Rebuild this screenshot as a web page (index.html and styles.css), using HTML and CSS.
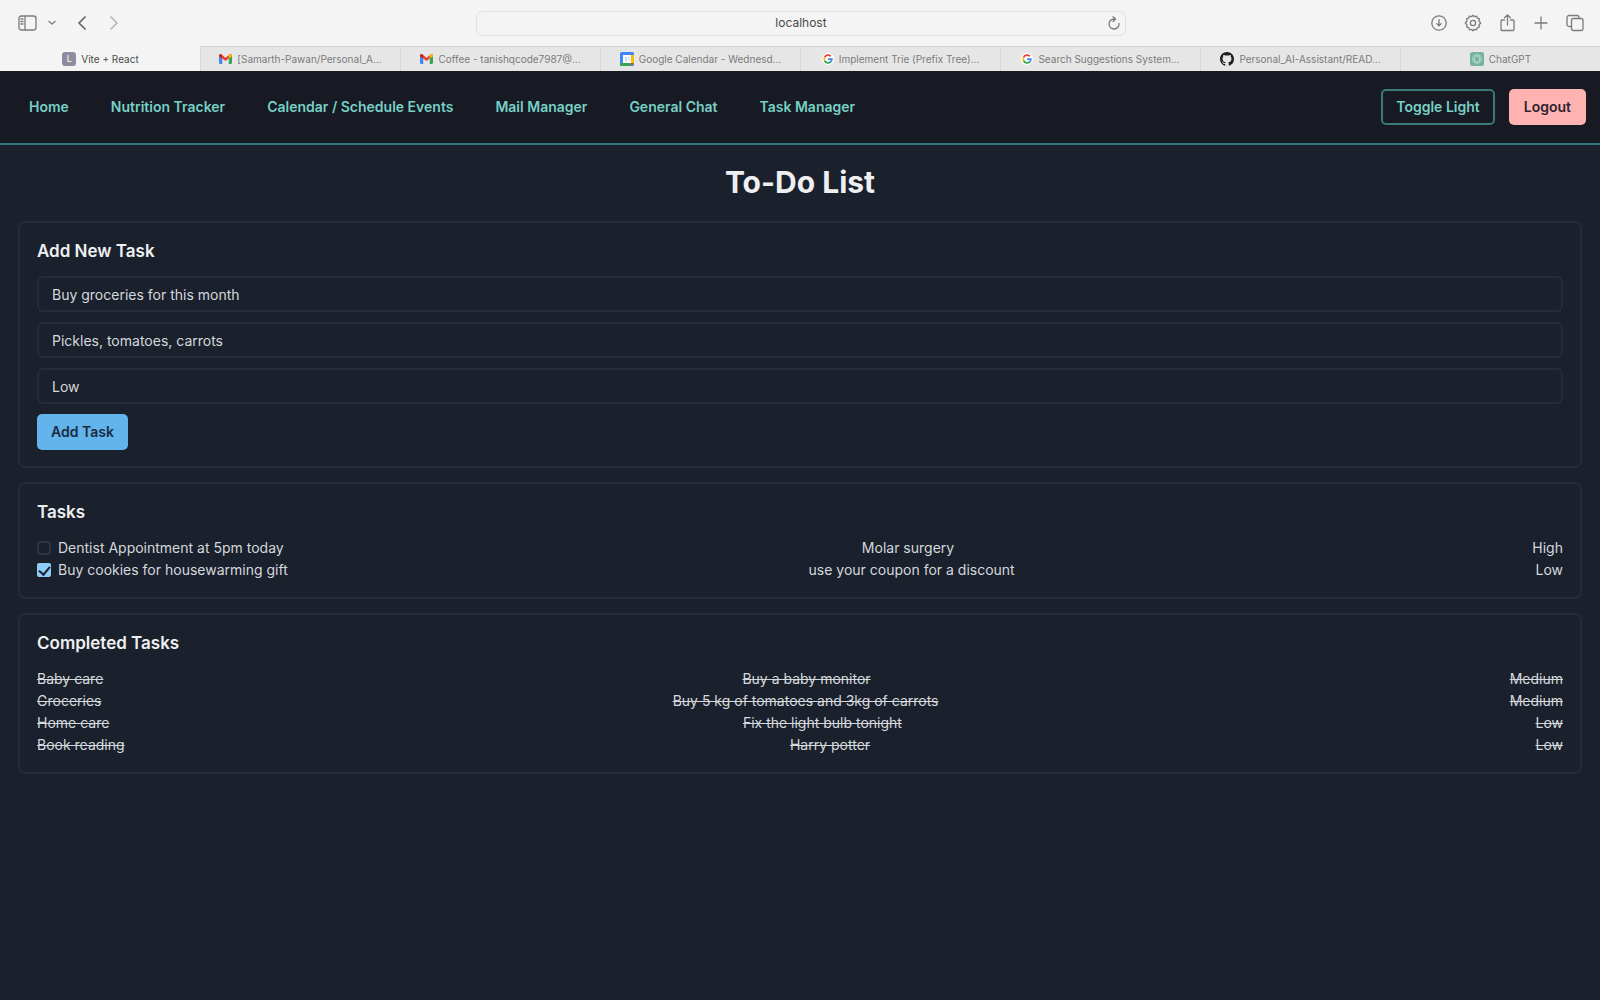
FILE: index.html
```html
<!DOCTYPE html>
<html lang="en">
<head>
<meta charset="utf-8">
<meta name="viewport" content="width=device-width, initial-scale=1">
<title>To-Do List</title>
<link rel="stylesheet" href="styles.css">
</head>
<body>
<svg class="defs" aria-hidden="true">
  <symbol id="gmail" viewBox="0 0 24 18">
    <path fill="#4285f4" d="M0 3v13a2 2 0 0 0 2 2h4V6z"/>
    <path fill="#34a853" d="M24 3v13a2 2 0 0 1-2 2h-4V6z"/>
    <path fill="#ea4335" d="M0 3C0 0 3-1 5 1l7 5.500 7-5.500c2-2 5-1 5 2l-6 5-6 4.500L6 8z"/>
    <path fill="#c5221f" d="M0 3C0 .5 3-1 5 1l1 .8V8L0 4z"/>
    <path fill="#fbbc04" d="M24 3c0-2.500-3-4-5-2l-1 .8V8l6-4z"/>
  </symbol>
  <symbol id="google" viewBox="0 0 48 48">
    <circle cx="24" cy="24" r="24" fill="#fff"/>
    <g fill="none" stroke-width="7">
      <path stroke="#ea4335" d="M10.500 17A15.500 15.500 0 0 1 35 13"/>
      <path stroke="#fbbc05" d="M10.500 31a15.500 15.500 0 0 1 0-14"/>
      <path stroke="#34a853" d="M35 35a15.500 15.500 0 0 1-24.500-4"/>
      <path stroke="#4285f4" d="M24 24h15.500A15.500 15.500 0 0 1 34 36"/>
    </g>
  </symbol>
</svg>

<div class="browser">
  <div class="toolbar">
    <div class="tools tools-left">
      <button class="tool" aria-label="Sidebar"><svg width="20" height="16" viewBox="0 0 20 16"><rect x="1" y="1" width="17" height="14" rx="2.500"/><path d="M7 1v14M3 4h2M3 6.500h2M3 9h2"/></svg></button>
      <button class="tool tool-menu" aria-label="Tab groups"><svg width="8" height="6" viewBox="0 0 8 6"><path d="M1 1.500l3 2.500 3-2.500"/></svg></button>
      <button class="tool tool-back" aria-label="Back"><svg width="10" height="14" viewBox="0 0 10 14"><path d="M8 1L2 7l6 6"/></svg></button>
      <button class="tool tool-forward" aria-label="Forward"><svg width="10" height="14" viewBox="0 0 10 14"><path d="M2 1l6 6-6 6"/></svg></button>
    </div>
    <div class="address">
      <input class="address-input" type="text" value="localhost" aria-label="Address">
      <button class="tool reload" aria-label="Reload"><svg width="14" height="14" viewBox="0 0 14 14"><path d="M12 7.500A5 5 0 1 1 7 3h1.500M6 .8L8.600 3 6 5.400"/></svg></button>
    </div>
    <div class="tools tools-right">
      <button class="tool" aria-label="Downloads"><svg width="18" height="18" viewBox="0 0 18 18"><circle cx="9" cy="9" r="7.200"/><path d="M9 5.500v6M6.800 9.600L9 11.800l2.200-2.200"/></svg></button>
      <button class="tool" aria-label="Settings"><svg width="18" height="18" viewBox="0 0 18 18"><path d="M9 1.200l1.500 1.500 2-.6.8 2 2.100.7-.5 2.100L16.700 9l-1.800 2 .5 2-2.100.8-.8 2-2-.5L9 16.800l-1.500-1.500-2 .5-.8-2-2.100-.8.500-2L1.300 9l1.800-2.100-.5-2.100 2.100-.7.800-2 2 .6z"/><circle cx="9" cy="9" r="2.600"/></svg></button>
      <button class="tool" aria-label="Share"><svg width="18" height="18" viewBox="0 0 18 18"><path d="M6.500 6H4a1 1 0 0 0-1 1v8.500a1 1 0 0 0 1 1h11a1 1 0 0 0 1-1V7a1 1 0 0 0-1-1h-2.500M9.500 11V1M6.500 3.800L9.500 1l3 2.800"/></svg></button>
      <button class="tool" aria-label="New tab"><svg width="18" height="18" viewBox="0 0 18 18"><path d="M9 3v12M3 9h12"/></svg></button>
      <button class="tool" aria-label="Tab overview"><svg width="18" height="18" viewBox="0 0 18 18"><rect x="5.500" y="4.500" width="11.500" height="12" rx="2"/><path d="M5.500 12.500H3a2 2 0 0 1-2-2V3.500a2 2 0 0 1 2-2h8a2 2 0 0 1 2 2v1"/></svg></button>
    </div>
  </div>
  <nav class="tabs" aria-label="Tabs">
    <a class="tab tab-active" href="#"><span class="letter">L</span><span class="tab-name">Vite + React</span></a>
    <a class="tab" href="#"><svg class="mail-icon"><use href="#gmail"/></svg><span class="tab-name">[Samarth-Pawan/Personal_A...</span></a>
    <a class="tab" href="#"><svg class="mail-icon"><use href="#gmail"/></svg><span class="tab-name">Coffee - tanishqcode7987@...</span></a>
    <a class="tab" href="#"><svg class="icon" viewBox="0 0 14 14"><rect width="14" height="14" rx="1.500" fill="#4285f4"/><path fill="#fbbc04" d="M11 3h3v8h-3z"/><path fill="#34a853" d="M0 11h11v3H1.500A1.500 1.500 0 0 1 0 12.500z"/><path fill="#ea4335" d="M11 11h3l-3 3z"/><path fill="#fff" d="M3 3h8v8H3z"/><path fill="none" stroke="#a9c7fa" stroke-width=".8" d="M5 5.500h1.500v3.500M5 7.200h1.500M5 9h1.500M8 5.500h1V9"/></svg><span class="tab-name">Google Calendar - Wednesd...</span></a>
    <a class="tab" href="#"><svg class="icon-small"><use href="#google"/></svg><span class="tab-name">Implement Trie (Prefix Tree)...</span></a>
    <a class="tab" href="#"><svg class="icon-small"><use href="#google"/></svg><span class="tab-name">Search Suggestions System...</span></a>
    <a class="tab" href="#"><svg class="icon" viewBox="0 0 16 16"><path fill="#1b1f24" d="M8 0C3.580 0 0 3.580 0 8c0 3.540 2.290 6.530 5.470 7.590.4.070.55-.17.55-.38 0-.19-.01-.82-.01-1.490-2.010.37-2.530-.49-2.690-.94-.09-.23-.48-.94-.82-1.130-.28-.15-.68-.52-.01-.53.63-.01 1.080.58 1.230.82.72 1.210 1.870.87 2.330.66.07-.52.28-.87.51-1.070-1.780-.2-3.640-.89-3.640-3.950 0-.87.31-1.590.82-2.150-.08-.2-.36-1.020.08-2.120 0 0 .67-.21 2.200.82a7.600 7.600 0 0 1 4 0c1.530-1.040 2.200-.82 2.200-.82.44 1.100.16 1.920.08 2.120.51.56.82 1.270.82 2.150 0 3.070-1.870 3.750-3.650 3.950.29.25.54.73.54 1.480 0 1.070-.01 1.930-.01 2.200 0 .21.15.46.55.38A8.010 8.010 0 0 0 16 8c0-4.420-3.580-8-8-8z"/></svg><span class="tab-name">Personal_AI-Assistant/READ...</span></a>
    <a class="tab" href="#"><svg class="icon" viewBox="0 0 14 14"><rect width="14" height="14" rx="2.500" fill="#74b3a0"/><g fill="none" stroke="#b9dcd2" stroke-width=".7"><ellipse cx="7" cy="7" rx="2.600" ry="4.800"/><ellipse cx="7" cy="7" rx="2.600" ry="4.800" transform="rotate(60 7 7)"/><ellipse cx="7" cy="7" rx="2.600" ry="4.800" transform="rotate(120 7 7)"/></g></svg><span class="tab-name">ChatGPT</span></a>
  </nav>
</div>

<header class="site-header">
  <nav class="site-nav">
    <a href="#">Home</a>
    <a href="#">Nutrition Tracker</a>
    <a href="#">Calendar / Schedule Events</a>
    <a href="#">Mail Manager</a>
    <a href="#">General Chat</a>
    <a href="#">Task Manager</a>
  </nav>
  <div class="actions">
    <button class="button button-outline">Toggle Light</button>
    <button class="button button-logout">Logout</button>
  </div>
</header>

<main class="page">
  <h1>To-Do List</h1>

  <section class="card">
    <h2>Add New Task</h2>
    <form class="task-form">
      <input class="field" type="text" value="Buy groceries for this month" aria-label="Task name">
      <input class="field" type="text" value="Pickles, tomatoes, carrots" aria-label="Description">
      <input class="field" type="text" value="Low" aria-label="Priority">
      <button class="button button-add" type="button">Add Task</button>
    </form>
  </section>

  <section class="card">
    <h2>Tasks</h2>
    <ul class="list">
      <li><label class="check"><input type="checkbox">Dentist Appointment at 5pm today</label><span>Molar surgery</span><span>High</span></li>
      <li><label class="check"><input type="checkbox" checked>Buy cookies for housewarming gift</label><span>use your coupon for a discount</span><span>Low</span></li>
    </ul>
  </section>

  <section class="card">
    <h2>Completed Tasks</h2>
    <ul class="list list-done">
      <li><span>Baby care</span><span>Buy a baby monitor</span><span>Medium</span></li>
      <li><span>Groceries</span><span>Buy 5 kg of tomatoes and 3kg of carrots</span><span>Medium</span></li>
      <li><span>Home care</span><span>Fix the light bulb tonight</span><span>Low</span></li>
      <li><span>Book reading</span><span>Harry potter</span><span>Low</span></li>
    </ul>
  </section>
</main>
</body>
</html>
```
FILE: styles.css
```css
* { box-sizing: border-box; }

body {
  margin: 0;
  min-height: 100vh;
  background: #1a202c;
  color: #d5d8dc;
  font: 14px/22px Inter, "Liberation Sans", sans-serif;
}

button, input { font: inherit; color: inherit; }
a { color: inherit; text-decoration: none; }
.defs { position: absolute; width: 0; height: 0; }

/* Browser frame */
.browser { background: #f4f4f4; color: #4b4b4b; }

.toolbar {
  display: grid;
  grid-template-columns: 1fr 650px 1fr;
  align-items: center;
  height: 46px;
  padding: 0 16px 0 18px;
}

.tools { display: flex; align-items: center; }
.tools-right { justify-content: flex-end; gap: 16px; }

.tool {
  display: flex;
  padding: 0;
  border: 0;
  background: none;
  color: #7c7c7c;
}

.tool svg {
  fill: none;
  stroke: currentColor;
  stroke-width: 1.3;
  stroke-linecap: round;
  stroke-linejoin: round;
}

.tool-menu { margin-left: 10px; }
.tool-back { margin-left: 21px; color: #666; }
.tool-forward { margin-left: 22px; color: #b8b8b8; }
.tool-back svg, .tool-forward svg { stroke-width: 1.7; }

.address {
  display: flex;
  align-items: center;
  height: 25px;
  padding: 0 4px 0 18px;
  border: 1px solid #e2e2e2;
  border-radius: 6px;
}

.address-input {
  flex: 1;
  min-width: 0;
  padding: 0;
  border: 0;
  background: none;
  text-align: center;
  font-size: 12px;
}

.tabs {
  display: grid;
  grid-template-columns: repeat(8, 1fr);
  height: 25px;
}

.tab {
  display: flex;
  align-items: center;
  justify-content: center;
  gap: 5px;
  min-width: 0;
  border-top: 1px solid #d2d2d2;
  border-left: 1px solid #d9d9d9;
  background: #e6e6e6;
  color: #7b7b7b;
  font-size: 10px;
  white-space: nowrap;
}

.tab-active { border-color: transparent; background: none; color: #4b4b4b; }
.icon { flex: none; width: 14px; height: 14px; }
.icon-small { flex: none; width: 12px; height: 12px; }
.mail-icon { flex: none; width: 13px; height: 10px; }

.letter {
  width: 14px;
  height: 14px;
  border-radius: 3px;
  background: #8e8c9e;
  color: #fff;
  font-size: 9px;
  line-height: 14px;
  text-align: center;
}

/* Application */
.site-header {
  display: flex;
  align-items: center;
  justify-content: space-between;
  height: 74px;
  padding: 0 14px 0 29px;
  border-bottom: 2px solid #2c7a7b;
  background: #171923;
  color: #81e6d9;
}

.site-nav { display: flex; gap: 42px; color: #76d0c5; font-weight: 600; }
.actions { display: flex; gap: 14px; }

.button {
  height: 36px;
  padding: 0 14px;
  border: 1px solid transparent;
  border-radius: 5px;
  font-weight: 600;
}

.button-outline { padding: 0 13px; border: 2px solid #38797a; background: none; color: #76d0c5; }
.button-logout { background: #feb2b2; color: #30242f; }
.button-add { align-self: flex-start; padding: 0 13px; background: #63b3ed; color: #1a2b40; }

.page {
  display: flex;
  flex-direction: column;
  gap: 14px;
  padding: 18px;
}

h1, h2 { margin: 0; color: #eeeff0; }
h1 { margin-bottom: 6px; font-size: 30px; line-height: 38px; text-align: center; }
h2 { margin-bottom: 14px; font-size: 17px; font-weight: 600; line-height: 22px; }

.card {
  padding: 17px 17px 16px;
  border: 2px solid #252c38;
  border-radius: 7px;
}

.task-form { display: flex; flex-direction: column; gap: 10px; }

.field {
  height: 36px;
  padding: 0 13px;
  border: 2px solid #252c38;
  border-radius: 6px;
  background: none;
}

.list { margin: 0; padding: 0; list-style: none; }
.list li { display: flex; justify-content: space-between; }
.list-done { text-decoration: line-through; }
.check { display: flex; align-items: center; gap: 7px; }

.check input {
  display: grid;
  place-items: center;
  appearance: none;
  width: 14px;
  height: 14px;
  margin: 0;
  border: 2px solid #2d3440;
  border-radius: 2px;
}

.check input:checked { border-color: #90cdf4; background: #90cdf4; }

.check input:checked::before {
  content: "";
  width: 5px;
  height: 9px;
  border: solid #1a202c;
  border-width: 0 2px 2px 0;
  transform: translateY(-1px) rotate(40deg);
}
```
